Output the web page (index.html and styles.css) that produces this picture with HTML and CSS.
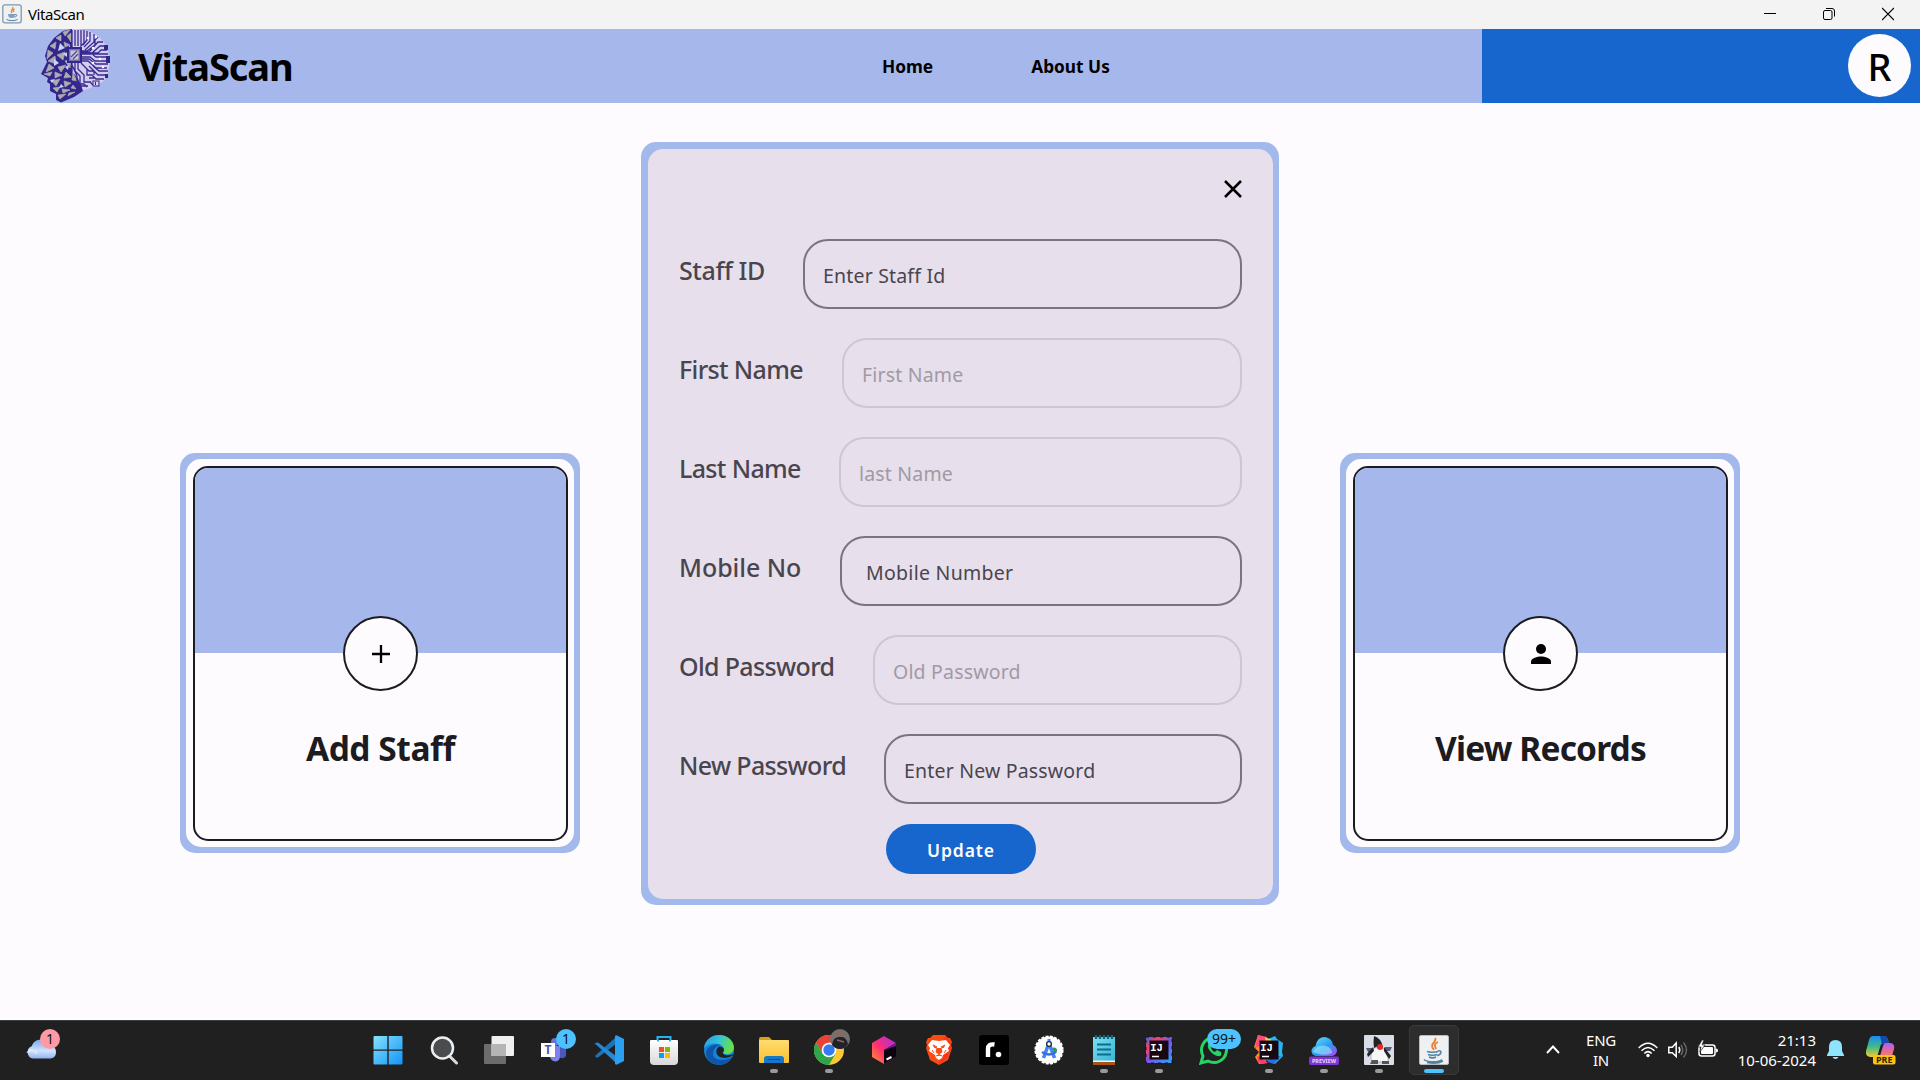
FILE: index.html
```html
<!DOCTYPE html>
<html lang="en">
<head>
<meta charset="utf-8">
<title>VitaScan</title>
<link rel="stylesheet" href="styles.css">
</head>
<body>
<div class="titlebar">
  <svg class="app-icon" width="20" height="20" viewBox="0 0 20 20"><rect x=".8" y=".8" width="18.4" height="18" rx="2" fill="#eef1f4" stroke="#7d9ab0" stroke-width="1.3"/><path d="M10.500 3c2 2-3 3-.5 6M12.500 5c-2 1-1 2-.5 3" fill="none" stroke="#ee8a35" stroke-width="1.400"/><path d="M6 10h7c0 3-1 4-3.500 4S6.500 13 6 10z" fill="#7f9fbd"/><path d="M13 10.500c3-.5 2 2.500-.5 2.500M4.500 15.500c3 1.500 8 1.500 11 0" fill="none" stroke="#5382a1" stroke-width="1"/></svg>
  <span class="titlebar-name">VitaScan</span>
  <div class="window-controls">
    <svg width="12" height="14" viewBox="0 0 12 14"><path d="M0 6.500h12" stroke="#000"/></svg>
    <svg width="12" height="14" viewBox="0 0 12 14" fill="none" stroke="#000"><rect x=".5" y="3.500" width="8.500" height="9" rx="1.500"/><path d="M3 1.500h6q2.500 0 2.500 2.500v5.500"/></svg>
    <svg width="12" height="14" viewBox="0 0 12 14"><path d="M0 1l12 12M12 1L0 13" stroke="#000" stroke-width="1.200"/></svg>
  </div>
</div>

<header class="header">
  <div class="header-main">
    <svg class="logo" width="72" height="74" viewBox="4 3 72 74">
      <path d="M36 3L27 5 18 12 12 20 9 30 11 36 5 48 12 52 11 56 14 58 14 65 20 68 20 74 25 76.500 38 71 53 61 46 44 36 36z" fill="#33268c"/>
      <g fill="#acacae" stroke="#acacae" stroke-width=".7"><path d="M27 6l7-2-5 6zM20 12l5-3 0 6zM31 10l4-3v9zM14 20l6-4-1 7zM12 24l5 3-6 6zM28 16l6 3-5 2zM21 29l8-3-2 8zM12 35l7-5 1 8zM29 35l6-2-1 9zM13 38l5 4-8 4zM22 41l8-2-5 7zM8 48l8-2-2 4zM19 46l7 3-7 3zM30 46l5 5-7 1zM16 55l8-2-4 7zM28 55l7 2-6 4zM37 47l4 8-5-1zM17 62l7-1-3 5zM26 63l8 1-7 3zM37 59l3 4-5-1zM22 69l8-1-6 5zM33 67l6-1-7 4z"/></g>
      <g fill="#c6d4fb"><path d="M24 17l5 5-7 3zM18 33l5 4-5 3zM27 28l5-2-1 5zM32 22l2-3v7zM19 53l-3 4-2-3zM29 41l4-2-1 5zM25 58l3 3-5 1z"/></g>
      <path d="M36 3Q60 3 69 18Q76 31 72 47Q69 57 57 61L47 65Q43 51 36 46z" fill="#d3cdee"/>
      <g fill="none" stroke="#3a2b91" stroke-width="1.300"><path d="M36 4v42M39 4v16M42 4v16M45 4v16l3-3V4M51 5v9l-4 5M54 6v9l-6 6M58 8v8l-9 8M62 11l-3 3v5l-8 6h-5M67 16h-5l-9 10h-7M70 20h-6l-8 7H46M71 24h-6l-3 3h-7M72 28H46M72 31H60l-3-2M46 31h8l5 4h13M46 33h7l7 5h12M46 35h6l8 7h11M72 45h-9l-6-5M71 49h-9l-9-9M45 37l6 6v6h5l4 4h8M42 37v6l6 6v7h6l3 3M39 37v8l5 5v8h4l3 3M36 39l5 11v10M47 39l6 6h5v4M53 52h6M44 60h8M50 56h5"/></g>
      <g fill="#f8f6ff"><circle cx="57" cy="22" r="1.300"/><circle cx="64" cy="33" r="1.300"/><circle cx="57" cy="37" r="1.300"/><circle cx="52" cy="12" r="1.200"/><circle cx="67" cy="41" r="1.300"/><circle cx="60" cy="11" r="1.200"/></g>
      <path d="M68 19h4v5h-4zM70 30h4v7h-4zM69 48h3v4h-3z" fill="#33268c"/>
      <rect x="32" y="22" width="13" height="14" fill="#7770ae" stroke="#33268c" stroke-width="2"/><rect x="34.500" y="24.500" width="8" height="9" fill="#c9c7d5"/><path d="M35 31l6-6M37 33l5-5" stroke="#51469c" stroke-width="1.300"/>
      <rect x="57" y="55" width="6" height="5" fill="#d7d2f0" stroke="#33268c"/><path d="M59.500 56v3" stroke="#33268c"/>
    </svg>
    <h1 class="brand">VitaScan</h1>
    <nav class="nav"><a>Home</a><a>About Us</a></nav>
  </div>
  <div class="header-user"><div class="avatar">R</div></div>
</header>

<main class="content">
  <section class="card">
    <div class="card-frame">
      <div class="card-body">
        <div class="card-top"></div>
        <div class="card-circle"><svg width="18" height="18" viewBox="0 0 18 18"><path d="M9 0v18M0 9h18" stroke="#000" stroke-width="2.300"/></svg></div>
        <h2 class="card-title card-title-add">Add Staff</h2>
      </div>
    </div>
  </section>

  <section class="dialog">
    <form class="form">
      <div class="close-row"><svg width="18" height="18" viewBox="0 0 18 18"><path d="M1 1l16 16M17 1L1 17" stroke="#000" stroke-width="2.500"/></svg></div>
      <div class="rows">
        <div class="row row-staff"><label>Staff ID</label><div class="field">Enter Staff Id</div></div>
        <div class="row row-first"><label>First Name</label><div class="field disabled">First Name</div></div>
        <div class="row row-last"><label>Last Name</label><div class="field disabled">last Name</div></div>
        <div class="row row-mobile"><label>Mobile No</label><div class="field">Mobile Number</div></div>
        <div class="row row-old"><label>Old Password</label><div class="field disabled">Old Password</div></div>
        <div class="row row-new"><label>New Password</label><div class="field">Enter New Password</div></div>
      </div>
      <div class="update">Update</div>
    </form>
  </section>

  <section class="card">
    <div class="card-frame">
      <div class="card-body">
        <div class="card-top"></div>
        <div class="card-circle"><svg width="20" height="20" viewBox="0 0 20 20"><circle cx="10" cy="5" r="5"/><path d="M0 20v-2.500C0 14 6.500 12.500 10 12.500S20 14 20 17.500V20z"/></svg></div>
        <h2 class="card-title card-title-view">View Records</h2>
      </div>
    </div>
  </section>
</main>

<footer class="taskbar">
  <svg width="0" height="0" class="defs"><defs>
    <linearGradient id="win" x1="0" y1="0" x2="30" y2="30" gradientUnits="userSpaceOnUse"><stop offset="0" stop-color="#8ae3fd"/><stop offset="1" stop-color="#0f93f7"/></linearGradient>
    <linearGradient id="cloud" x1="0" y1="0" x2="0" y2="1"><stop offset="0" stop-color="#78aaf0"/><stop offset=".6" stop-color="#d0e3fd"/><stop offset="1" stop-color="#8fb4ee"/></linearGradient>
    <linearGradient id="folder" x1="0" y1="0" x2="0" y2="1"><stop offset="0" stop-color="#ffdc6e"/><stop offset="1" stop-color="#fbc02f"/></linearGradient>
    <linearGradient id="edgeA" x1="0" y1="0" x2="1" y2=".3"><stop offset="0" stop-color="#2597e8"/><stop offset=".5" stop-color="#35c1dc"/><stop offset="1" stop-color="#63e04a"/></linearGradient>
    <linearGradient id="tool" x1="0" y1="1" x2="1" y2="0"><stop offset="0" stop-color="#ff9a2e"/><stop offset=".45" stop-color="#ff2e70"/><stop offset="1" stop-color="#a030f0"/></linearGradient>
    <linearGradient id="ijA" x1="0" y1="0" x2="1" y2="1"><stop offset="0" stop-color="#2b6bf0"/><stop offset=".25" stop-color="#ff4060"/><stop offset=".5" stop-color="#7a55e8"/><stop offset="1" stop-color="#28a8ff"/></linearGradient>
    <linearGradient id="bag" x1="0" y1="0" x2="0" y2="1"><stop offset="0" stop-color="#fff"/><stop offset="1" stop-color="#d8d8d8"/></linearGradient>
    <linearGradient id="note" x1="0" y1="0" x2="1" y2="1"><stop offset="0" stop-color="#7fe0f2"/><stop offset="1" stop-color="#35b4d4"/></linearGradient>
    <linearGradient id="dev" x1="0" y1="0" x2="1" y2="1"><stop offset="0" stop-color="#6ee0fa"/><stop offset=".55" stop-color="#2b9cf0"/><stop offset="1" stop-color="#b63ff0"/></linearGradient>
    <linearGradient id="copA" x1="0" y1="0" x2="0" y2="1"><stop offset="0" stop-color="#1b8cf2"/><stop offset=".5" stop-color="#3fb98b"/><stop offset="1" stop-color="#f2cc2c"/></linearGradient>
    <linearGradient id="copB" x1="0" y1="0" x2="0" y2="1"><stop offset="0" stop-color="#b45cf2"/><stop offset="1" stop-color="#fb7a5c"/></linearGradient>
  </defs></svg>
  <div class="weather">
    <svg width="30" height="20" viewBox="0 0 30 20"><path d="M7 19.500a6.500 6.500 0 0 1-1-12.500C7 1 18 -3 21 5c5 0 9 3 9 8s-3 6.500-7 6.500z" fill="url(#cloud)"/><path d="M1 14c3-5 8-3 10 1" stroke="#eef5ff" stroke-width="1.300" fill="none" opacity=".7"/></svg>
    <span class="badge badge-alert">1</span>
  </div>

  <div class="apps">
    <div class="app app-start"><svg width="30" height="30" viewBox="0 0 30 30"><path d="M.5 2a1 1 0 0 1 1-1H14.300V14.500H.5zM15.700 1h12.800a1 1 0 0 1 1 1v12.500H15.700zM.5 15.800h13.800V29.500H1.500a1 1 0 0 1-1-1zM15.700 15.800h13.800v12.700a1 1 0 0 1-1 1H15.700z" fill="url(#win)"/></svg></div>
    <div class="app"><svg width="30" height="30" viewBox="0 0 30 30"><path d="M20.500 21l7 7" stroke="#d9dde2" stroke-width="3" stroke-linecap="round"/><circle cx="13.500" cy="13" r="10.500" fill="#4a4c4e" stroke="#eceff1" stroke-width="2.500"/></svg></div>
    <div class="app"><svg width="30" height="30" viewBox="0 0 30 30"><rect x="0" y="9" width="22" height="20" rx="1" fill="#6c6c6c"/><rect x="7.500" y="1" width="22.500" height="20" rx="1" fill="#efefef"/><path d="M7.500 9H22v12H7.500z" fill="#b5b5b5"/></svg></div>
    <div class="app"><svg width="30" height="30" viewBox="0 0 30 30"><circle cx="16" cy="7" r="4" fill="#6b73d8"/><path d="M20 11h7v10q-3 4-7 1z" fill="#4d55bf"/><path d="M12 11h9v10q0 5-4.500 5.500Q12 26 11 22z" fill="#7b83eb"/><rect x="2" y="8" width="14" height="14" fill="#fff"/><text x="9" y="19" class="t-teams">T</text></svg><span class="badge">1</span></div>
    <div class="app"><svg width="30" height="30" viewBox="0 0 30 30"><path d="M2 20L22 2v7L4 22.500q-2 .5-3-1.500z" fill="#1a74b8"/><path d="M2 9.500L22 28v-7L4 7.500Q2 7 .500 9z" fill="#2489d8"/><path d="M21 1q1-1 2-.5L30 4v22l-7 3.500q-1 .5-2-.5z" fill="#2ba0f0"/></svg></div>
    <div class="app"><svg width="30" height="30" viewBox="0 0 30 30"><path d="M8.500 7V2h13v5" fill="none" stroke="#2bb2ee" stroke-width="2"/><path d="M1 6q0-1 1-1h26q1 0 1 1v20q0 4-4 4H5q-4 0-4-4z" fill="url(#bag)"/><path d="M8 5v1.500h2V5M20 5v1.500h2V5" fill="#2bb2ee"/><path d="M10 12h5v5h-5z" fill="#f25022"/><path d="M16 12h5v5h-5z" fill="#7fba00"/><path d="M10 18h5v5h-5z" fill="#00a4ef"/><path d="M16 18h5v5h-5z" fill="#ffb900"/></svg></div>
    <div class="app"><svg width="30" height="30" viewBox="0 0 30 30"><circle cx="15" cy="15" r="15" fill="#1583d8"/><path d="M0 13C2-4 28-4 30 12c0 6-5 8-9 7-3-1-2-2-1-4 1-6-12-10-20-2z" fill="url(#edgeA)"/><path d="M9 19c0-5 4-9 8-9-5-2-15 1-15 8 0 8 8 12 13 12 6 0 11-3 13-8-8 5-19 3-19-3z" fill="#0f56a8"/><path d="M15 11.500c-3 2-4 7 0 10 3 2 9 2 14-1 0-1 0-1-.5-1C24 21 18 20 19 17.500c2-2 1-6-4-6z" fill="#202225"/></svg></div>
    <div class="app running"><svg width="30" height="30" viewBox="0 0 30 30"><path d="M0 4q0-2 2-2h8l3 3v5H0z" fill="#dba112"/><rect y="5" width="30" height="23" rx="1" fill="url(#folder)"/><path d="M5 28v-4q0-3 3-3h14q3 0 3 3v4z" fill="#1477ca"/><path d="M9 24.500h12" stroke="#0d4f92"/></svg></div>
    <div class="app running"><svg width="30" height="30" viewBox="0 0 30 30"><circle cx="15" cy="15" r="15" fill="#fcc934"/><path d="M2 7.500A15 15 0 0 1 28 7.500H15L8.500 18.800z" fill="#ea4335"/><path d="M2 7.500A15 15 0 0 0 15 30l6.500-11.200H8.500z" fill="#2ea44c"/><circle cx="15" cy="15" r="7.300" fill="#fff"/><circle cx="15" cy="15" r="5.700" fill="#367af0"/></svg>
      <svg class="profile" width="20" height="20" viewBox="0 0 20 20"><circle cx="10" cy="10" r="10" fill="#77716c"/><path d="M2 16q1-7 6-8l5 0q4 2 5 7-3 5-8 5T2 16z" fill="#20232a"/><circle cx="10" cy="5" r="2.800" fill="#8e695b"/><path d="M7 11l7 2" stroke="#8e695b" stroke-width="1.500"/></svg></div>
    <div class="app"><svg width="30" height="30" viewBox="0 0 30 30"><path d="M15 1l12 7v14l-12 7-12-7V8z" fill="url(#tool)"/><path d="M15 15l12-7v14l-12 7z" fill="#0a0210"/><path d="M15 15l12-7v3z" fill="#6b1c92"/><path d="M17.500 24.500l5-2.500" stroke="#fff" stroke-width="2"/></svg></div>
    <div class="app"><svg width="30" height="30" viewBox="0 0 30 30"><path d="M9 0h12l3 3h2l2 4-1 3 1 3-4 12-9 5-9-5L2 13l1-3-1-3 2-4h2z" fill="#fb4a12"/><path d="M20 1l6 4 1 8-4 11-8 5z" fill="#ff2a1e" opacity=".6"/><path d="M8 5l7 1 7-1 4 5-2 3 1 3-6 4-1 3-3 2-3-2-1-3-6-4 1-3-2-3z" fill="#fff"/><path d="M9 10l4 2-2 1zM21 10l-4 2 2 1zM13 13l-1 4 3 2 3-2-1-4M8 15l2 3M22 15l-2 3M12 21l3-1.500 3 1.500" fill="#fb4a12" stroke="#fb4a12"/></svg></div>
    <div class="app"><svg width="30" height="30" viewBox="0 0 30 30"><rect width="30" height="30" rx="3" fill="#000"/><path d="M9 22V14q0-5.500 6.500-4.500" fill="none" stroke="#fff" stroke-width="4.400"/><circle cx="19.500" cy="19.500" r="2.800" fill="#fff"/></svg></div>
    <div class="app"><svg width="30" height="30" viewBox="0 0 30 30"><circle cx="15" cy="15" r="13.600" fill="#fff" stroke="#fff" stroke-width="2" stroke-dasharray="3 1.300"/><circle cx="20" cy="15.500" r="3" fill="#2f9e50"/><path d="M15 8L9.500 23M15 8l5.500 15" stroke="#4285f4" stroke-width="3.600"/><path d="M8 17q7 5 14 0" stroke="#3470d8" stroke-width="2.400" fill="none"/><path d="M13.500 4h3v4h-3z" fill="#4285f4"/><circle cx="15" cy="9" r="2.400" fill="#fff" stroke="#263042" stroke-width="1.400"/></svg></div>
    <div class="app running"><svg width="30" height="30" viewBox="0 0 30 30"><path d="M4 26h22v4H4z" fill="#a85318"/><path d="M4 2h22v24H4z" fill="url(#note)"/><path d="M4 25.500h22v1.500H4z" fill="#f3f3f3"/><path d="M8 9.500h14M8 14.500h14M8 19.500h14" stroke="#0c6d8c" stroke-width="1.800"/><path d="M7 0v4M11 0v4M15 0v4M19 0v4M23 0v4" stroke="#0c6780" stroke-width="2.300"/></svg></div>
    <div class="app running"><svg width="30" height="30" viewBox="0 0 30 30"><rect x="2" y="2" width="26" height="26" fill="url(#ijA)"/><rect x="2" y="2" width="26" height="26" fill="none" stroke="#0c1030" stroke-width="1" stroke-dasharray="3 4"/><rect x="5.500" y="5.500" width="19" height="19" fill="#170812"/><text x="12.500" y="15.500" class="t-ij">IJ</text><path d="M8 21.500h7" stroke="#fff" stroke-width="1.500"/></svg></div>
    <div class="app"><svg width="30" height="30" viewBox="0 0 30 30"><path d="M2 28l2-7A12.500 12.500 0 1 1 9 26z" fill="none" stroke="#25d366" stroke-width="3"/><path d="M10 8q-3 3 1 8 5 6 10 5 2-1 1-4l-4-2-2 2q-3-1-4-4l1-2-1.500-3.500z" fill="#25d366"/></svg><span class="badge badge-wide">99+</span></div>
    <div class="app running"><svg width="30" height="30" viewBox="0 0 30 30"><path d="M4 0l8 3-1 12 1 13-7 1-4-7 4-5-5-5z" fill="#ff8a2b"/><path d="M4 0l9 2-5 8-7 3z" fill="#ff4a7d"/><path d="M14 4l7-3 2 3 6 4-1 9 1 4-8 8-9-4z" fill="#24b7f2"/><path d="M14 22l13-1-7 8-6-2z" fill="#2171e8"/><path d="M3 21l5 2 6 5-6 1-4-2z" fill="#ff3b6b"/><path d="M11 2l7 3-6 4z" fill="#ffd23c"/><rect x="5.500" y="5.500" width="19" height="19" fill="#160a12"/><text x="12.500" y="15.500" class="t-ij">IJ</text><path d="M8 21.500h7" stroke="#fff" stroke-width="1.500"/></svg></div>
    <div class="app running"><svg width="30" height="30" viewBox="0 0 30 30"><path d="M7 21Q2 20 2.500 15q1-3 4-4Q8 2 16 2q7 1 8 8 3 1 4 5 0 5-5 6z" fill="url(#dev)"/><path d="M4 17q4-8 13-6 6 2 6 7-8 4-19-1z" fill="#a7effc" opacity=".55"/><rect y="21.500" width="30" height="8.500" rx="2" fill="#7d35d6"/><text x="15" y="28" class="t-preview">PREVIEW</text></svg></div>
    <div class="app running"><svg width="30" height="30" viewBox="0 0 30 30"><rect width="30" height="30" rx="1" fill="#d9dde6"/><path d="M2 13h7v4H4zM21 12h7l-2 4h-6z" fill="#506079"/><path d="M10 13q5-1 9 0 8 11 4 14H8Q5 21 10 13z" fill="#f6f6f6" stroke="#8b8b8b" stroke-width=".6"/><path d="M10 1q7 2 9 11-5-2-9 1Q9 7 10 1zM9 12l-6 7 1 3 6-6zM20 12l7 9-2 3-5-8z" fill="#222327"/><circle cx="16" cy="12" r="3" fill="#e8262c"/><path d="M8 25h6v4H6zM18 26h7v3h-7z" fill="#555"/></svg></div>
    <div class="app active"><svg width="30" height="30" viewBox="0 0 30 30"><rect x=".5" y=".5" width="29" height="29" rx="1.500" fill="#eef0f2" stroke="#b6bcc2"/><path d="M16 3c3 4-7 5-1 12M19 7c-5 2-3 4-2 7" fill="none" stroke="#ee7d2b" stroke-width="1.800"/><path d="M8 16.500c2 1 9 1 11 0M9 19.500c2 1 7 1 9 0M10 22c2 1 5 1 7 0M19 16c5-1 3 4-1 4.500M5 24.500c3 3 15 3 18 0M8 27.500c5 1 12 1 16-1.500" fill="none" stroke="#5382a1" stroke-width="1.500"/></svg></div>
  </div>

  <div class="tray">
    <svg class="chevron" width="14" height="9" viewBox="0 0 14 9"><path d="M1 8l6-6.500L13 8" fill="none" stroke="#fff" stroke-width="1.900"/></svg>
    <div class="lang"><span>ENG</span><span>IN</span></div>
    <svg class="wifi" width="20" height="16" viewBox="0 0 20 16" fill="none" stroke="#fff" stroke-width="1.500"><path d="M.7 6q9.300-9.500 18.600 0M3.500 8.800q6.500-6.600 13 0M6.300 11.500q3.700-3.700 7.400 0"/><circle cx="10" cy="13.500" r="1.700" fill="#fff" stroke="none"/></svg>
    <svg class="sound" width="20" height="18" viewBox="0 0 20 18" fill="none" stroke="#fff" stroke-width="1.500"><path d="M.8 6.200h3.500L8.200 2v13.500L4.300 11.800H.8zM10.800 6q2 3 0 6"/><path d="M13 4q3.500 5 0 10M15.500 1.500q6 7.500 0 15" stroke="#666"/></svg>
    <svg class="battery" width="20" height="17" viewBox="0 0 20 17"><rect x="1" y="5" width="16" height="11" rx="2.500" fill="none" stroke="#fff" stroke-width="1.500"/><rect x="3" y="7" width="12" height="7" rx="1" fill="#fff"/><path d="M18 8.500q2 0 2 2t-2 2z" fill="#fff"/><path d="M4 0L0 7h3l-1 5 5-7H4l2-5z" fill="#fff" stroke="#202020" stroke-width=".7"/></svg>
    <div class="clock"><span>21:13</span><span>10-06-2024</span></div>
    <svg class="bell" width="17" height="19" viewBox="0 0 17 19"><path d="M8.500 0Q15 0 15 7v4l2 4v1H0v-1l2-4V7Q2 0 8.500 0zM5.500 17h6q-1 2-3 2t-3-2z" fill="#8fe4fd"/></svg>
    <svg class="copilot" width="30" height="30" viewBox="0 0 30 30"><path d="M7 1h11q3 0 4 4l1 3h-5q-3 0-4 4l-2 7q-1 3-4 3H4q-5-1-4-6L3 5Q4 1 7 1z" fill="url(#copA)"/><path d="M14 1h4q3 0 4 4l1 3h-4q-2 0-3 2z" fill="#1648b4"/><path d="M19 8h6q4 1 3 6l-2 7H14l3-10q1-3 2-3z" fill="url(#copB)"/><rect x="7" y="20" width="22.500" height="9.500" rx="2" fill="#fcc40c"/><text x="18.200" y="28" class="t-pre">PRE</text></svg>
  </div>
</footer>
</body>
</html>
```
FILE: styles.css
```css
* { box-sizing: border-box; }
body {
  margin: 0;
  width: 1920px;
  height: 1080px;
  overflow: hidden;
  display: flex;
  flex-direction: column;
  background: #fefbff;
  color: #000;
  font-family: "Noto Sans", "Open Sans", sans-serif;
}
svg { display: block; flex: none; }
h1, h2 { margin: 0; }

/* Window title bar */
.titlebar {
  height: 29px;
  flex: none;
  display: flex;
  align-items: center;
  padding: 0 26px 2px 2px;
  background: #f3f3f3;
}
.titlebar-name { margin-left: 6px; font-size: 15px; letter-spacing: -0.45px; line-height: 20px; }
.window-controls { margin-left: auto; display: flex; gap: 47px; }

/* Application header */
.header { height: 74px; flex: none; display: flex; }
.header-main {
  width: 1482px;
  display: flex;
  align-items: center;
  padding-left: 40px;
  background: #a6b7ec;
}
.brand { width: 744px; margin-left: 26px; font-size: 38px; line-height: 50px; letter-spacing: -1.1px; }
.nav { display: flex; gap: 98px; padding-top: 1px; font-size: 17.3px; font-weight: 700; line-height: 24px; }
.header-user {
  flex: 1;
  display: flex;
  justify-content: flex-end;
  padding: 5px 9px 0 0;
  background: #1766cd;
}
.avatar {
  width: 63px;
  height: 63px;
  border-radius: 50%;
  background: #fefbff;
  text-align: center;
  font-size: 38px;
  font-weight: 500;
  line-height: 64px;
}

/* Content */
.content { flex: 1; display: flex; justify-content: center; align-items: flex-start; gap: 61px; padding-top: 39px; }
.card {
  width: 400px;
  height: 400px;
  margin-top: 311px;
  padding: 6px;
  border-radius: 15px;
  background: #a3b8eb;
}
.card-frame { height: 388px; padding: 7px 6px 6px 7px; border-radius: 15px; background: #fefbff; }
.card-body {
  height: 375px;
  display: flex;
  flex-direction: column;
  align-items: center;
  border: 2px solid #1c1b1f;
  border-radius: 15px;
  overflow: hidden;
}
.card-top { width: 100%; height: 185px; flex: none; background: #a6b7ec; }
.card-circle {
  width: 75px;
  height: 75px;
  flex: none;
  margin-top: -37px;
  display: flex;
  align-items: center;
  justify-content: center;
  border: 2px solid #1c1b1f;
  border-radius: 50%;
  background: #fefbff;
}
.card-title { margin-top: 34px; font-size: 33.5px; line-height: 46px; color: #1c1b1f; white-space: nowrap; }
.card-title-add { letter-spacing: -0.45px; }
.card-title-view { letter-spacing: -0.85px; }

.dialog { width: 638px; height: 763px; padding: 7px 6px 6px 7px; border-radius: 15px; background: #a3b8eb; }
.form { height: 750px; padding: 31px 31px 0 30px; border-radius: 15px; background: #e7dfeb; }
.close-row { display: flex; justify-content: flex-end; height: 59px; }
.rows { display: flex; flex-direction: column; gap: 29px; }
.row { display: flex; height: 70px; }
.row label {
  flex: none;
  padding: 14px 0 0 1px;
  font-size: 25px;
  font-weight: 500;
  line-height: 34px;
  letter-spacing: -0.65px;
  color: #49454f;
  white-space: nowrap;
}
.row-staff label { width: 125px; letter-spacing: -0.4px; }
.row-first label { width: 164px; }
.row-last label { width: 161px; }
.row-mobile label { width: 162px; letter-spacing: -0.05px; }
.row-old label { width: 195px; }
.row-new label { width: 206px; }
.field {
  flex: 1;
  padding: 21px 0 0 18px;
  border: 2px solid #79747e;
  border-radius: 25px;
  font-size: 19.5px;
  line-height: 28px;
  letter-spacing: 0.18px;
  color: #49454f;
}
.row-mobile .field { padding-left: 24px; letter-spacing: 0.28px; }
.field.disabled { border-color: #cdc7d3; color: #a09aa5; }
.update {
  width: 150px;
  height: 50px;
  margin: 20px auto 0;
  position: relative;
  left: 1px;
  padding-top: 1px;
  border-radius: 25px;
  background: #1766cd;
  color: #fff;
  font-size: 17.5px;
  font-weight: 600;
  letter-spacing: 0.9px;
  line-height: 50px;
  text-align: center;
}

/* Taskbar */
.taskbar { height: 60px; flex: none; display: flex; background: #202020; border-top: 1px solid #3c3f3f; }
.defs { position: absolute; }
.weather { position: relative; width: 361.5px; padding: 18px 0 0 26px; }
.apps { display: flex; height: 57px; }
.app { position: relative; width: 55px; display: flex; align-items: center; justify-content: center; }
.app-start { padding-right: 3px; }
.running::after, .active::after {
  content: "";
  position: absolute;
  bottom: 5px;
  width: 8px;
  height: 4px;
  border-radius: 2px;
  background: #9a9a9a;
}
.active { width: 50px; height: 50px; margin: 4px 0 0 2.5px; padding-bottom: 1px; border: 1px solid #3a3a3a; border-radius: 5px; background: #2d2d2d; }
.active::after { bottom: 1px; width: 20px; background: #4cc2ff; }
.badge {
  position: absolute;
  top: 8px;
  left: 29.5px;
  width: 20px;
  height: 20px;
  border-radius: 10px;
  background: #4cc2ff;
  color: #111;
  font-size: 14px;
  line-height: 20px;
  text-align: center;
}
.badge-alert { left: 40px; background: #ff99a4; }
.badge-wide { left: 20.5px; width: 34px; }
.profile { position: absolute; top: 8px; left: 28.5px; }
.t-teams, .t-ij, .t-preview, .t-pre { text-anchor: middle; font-weight: 700; }
.t-teams { font-size: 12px; fill: #4b53bc; }
.t-ij { font-family: "Liberation Mono", monospace; font-size: 10.5px; fill: #fff; }
.t-preview { font-size: 5.5px; fill: #e9d8ff; }
.t-pre { font-size: 9px; fill: #30260a; }

.tray { display: flex; align-items: center; margin-left: auto; padding: 0 14px 2px 0; color: #fff; font-size: 15px; line-height: 20px; }
.lang { width: 40px; margin-left: 21px; display: flex; flex-direction: column; text-align: center; letter-spacing: -0.3px; }
.wifi { margin-left: 17px; }
.sound { margin-left: 10px; }
.battery { margin-left: 10px; margin-top: -3px; }
.clock { width: 96px; margin-left: 2px; display: flex; flex-direction: column; text-align: right; letter-spacing: 0; }
.bell { margin-left: 11px; }
.copilot { margin-left: 22px; margin-right: 10px; }
```
